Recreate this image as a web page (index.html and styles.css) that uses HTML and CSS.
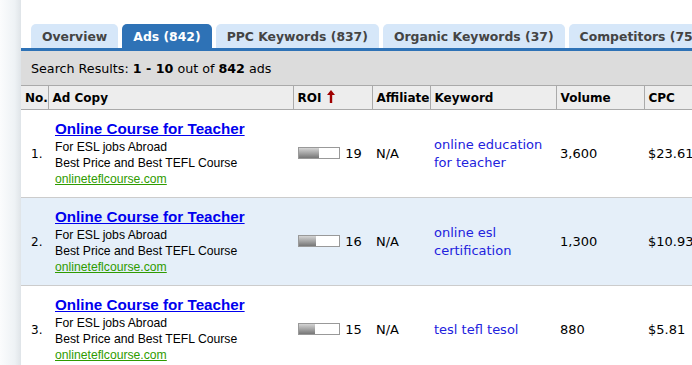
FILE: index.html
```html
<!DOCTYPE html>
<html lang="en">
<head>
    <meta charset="UTF-8">
    <title>Ads - Competitor Research</title>
    <link rel="stylesheet" href="styles.css">
</head>
<body>
<div class="page">
    <div class="sidebar-edge"></div>
    <div class="main">
        <ul class="tabs">
            <li class="tab">Overview</li>
            <li class="tab active">Ads (842)</li>
            <li class="tab">PPC Keywords (837)</li>
            <li class="tab">Organic Keywords (37)</li>
            <li class="tab">Competitors (758)</li>
        </ul>

        <div class="results-bar">
            Search Results: <b>1 - 10</b> out of <b>842</b> ads
        </div>

        <table class="ads-table">
            <colgroup>
                <col class="c-no"><col class="c-ad"><col class="c-roi"><col class="c-aff">
                <col class="c-kw"><col class="c-vol"><col class="c-cpc">
            </colgroup>
            <thead>
                <tr>
                    <th>No.</th>
                    <th>Ad Copy</th>
                    <th>ROI <svg class="sort-arrow" width="8" height="13" viewBox="0 0 8 13"><path d="M4 0 L8 5 L5.2 5 L5.2 13 L2.8 13 L2.8 5 L0 5 Z" fill="#a00000"/></svg></th>
                    <th>Affiliate</th>
                    <th>Keyword</th>
                    <th>Volume</th>
                    <th>CPC</th>
                </tr>
            </thead>
            <tbody>
                <tr>
                    <td class="num">1.</td>
                    <td class="ad">
                        <a class="ad-title" href="#">Online Course for Teacher</a>
                        <div>For ESL jobs Abroad</div>
                        <div>Best Price and Best TEFL Course</div>
                        <a class="ad-url" href="#">onlineteflcourse.com</a>
                    </td>
                    <td><span class="roi-bar"><span class="roi-fill" style="width: 20px"></span></span> 19</td>
                    <td>N/A</td>
                    <td><a class="kw" href="#">online education for teacher</a></td>
                    <td>3,600</td>
                    <td>$23.61</td>
                </tr>
                <tr class="alt">
                    <td class="num">2.</td>
                    <td class="ad">
                        <a class="ad-title" href="#">Online Course for Teacher</a>
                        <div>For ESL jobs Abroad</div>
                        <div>Best Price and Best TEFL Course</div>
                        <a class="ad-url" href="#">onlineteflcourse.com</a>
                    </td>
                    <td><span class="roi-bar"><span class="roi-fill" style="width: 17px"></span></span> 16</td>
                    <td>N/A</td>
                    <td><a class="kw" href="#">online esl certification</a></td>
                    <td>1,300</td>
                    <td>$10.93</td>
                </tr>
                <tr>
                    <td class="num">3.</td>
                    <td class="ad">
                        <a class="ad-title" href="#">Online Course for Teacher</a>
                        <div>For ESL jobs Abroad</div>
                        <div>Best Price and Best TEFL Course</div>
                        <a class="ad-url" href="#">onlineteflcourse.com</a>
                    </td>
                    <td><span class="roi-bar"><span class="roi-fill" style="width: 16px"></span></span> 15</td>
                    <td>N/A</td>
                    <td><a class="kw" href="#">tesl tefl tesol</a></td>
                    <td>880</td>
                    <td>$5.81</td>
                </tr>
            </tbody>
        </table>
    </div>
</div>
</body>
</html>
```

FILE: styles.css
```css
/* Base */
body {
    margin: 0;
    font-family: "DejaVu Sans", Verdana, sans-serif;
    font-size: 13px;
    color: #000;
    background-color: #fff;
    overflow: hidden;
}
.page {
    display: flex;
    min-height: 365px;
}
.sidebar-edge {
    width: 21px;
    flex: none;
    background: linear-gradient(to right, #fbfcfd, #eef2f5 70%, #dfe4e8);
}
.main {
    flex: none;
    width: 720px;
    padding-top: 24px;
}

/* Tabs */
.tabs {
    display: flex;
    gap: 4px;
    list-style: none;
    margin: 0;
    padding: 0 0 0 10px;
    border-bottom: 3px solid #2e72b6;
    white-space: nowrap;
}
.tab {
    height: 24px;
    line-height: 25px;
    padding: 0 11px;
    font-size: 12.4px;
    font-weight: bold;
    color: #444;
    background-color: #d6e7f9;
    border-radius: 5px 5px 0 0;
}
.tab.active {
    background-color: #2e72b6;
    color: #fff;
}

/* Results bar */
.results-bar {
    height: 34px;
    line-height: 35px;
    padding-left: 10px;
    font-size: 12.7px;
    background-color: #dcdcdc;
}

/* Table */
.ads-table {
    width: 692px;
    table-layout: fixed;
    border-collapse: collapse;
}
.c-no { width: 27px; }
.c-ad { width: 245px; }
.c-roi { width: 79px; }
.c-aff { width: 58px; }
.c-kw { width: 126px; }
.c-vol { width: 88px; }
.c-cpc { width: 69px; }

.ads-table th {
    height: 23px;
    padding: 0 4px;
    font-size: 12px;
    text-align: left;
    white-space: nowrap;
    background-color: #ededed;
    border: 1px solid #aaa;
}
.ads-table th:first-child {
    border-left: none;
}
.sort-arrow {
    vertical-align: -1px;
    margin-left: 1px;
}
.ads-table td {
    padding: 10px 4px;
    vertical-align: middle;
    border-bottom: 1px solid #ccc;
    white-space: nowrap;
}
.ads-table tr.alt td {
    background-color: #e5eff9;
}
.ads-table td.num {
    padding-left: 10px;
    font-size: 12px;
}

/* Ad copy */
.ad {
    font-family: "Liberation Sans", Arial, sans-serif;
    font-size: 12.2px;
    line-height: 16px;
}
.ad-title {
    display: inline-block;
    margin: 0 0 2px 3px;
    font-size: 15.2px;
    line-height: 17px;
    font-weight: bold;
    color: #0000ee;
}
.ad div {
    padding-left: 3px;
}
.ad-url {
    margin-left: 3px;
    color: #2f9b00;
}

/* ROI */
.roi-bar {
    display: inline-block;
    vertical-align: -1px;
    width: 40px;
    height: 10px;
    border: 1px solid #999;
    background-color: #fff;
    margin-left: 1px;
    margin-right: 1px;
}
.roi-fill {
    display: block;
    height: 100%;
    background: linear-gradient(to bottom, #d4d4d4, #777);
}

/* Keyword */
.kw {
    display: block;
    white-space: normal;
    line-height: 18px;
    color: #2222dd;
    text-decoration: none;
}
```
